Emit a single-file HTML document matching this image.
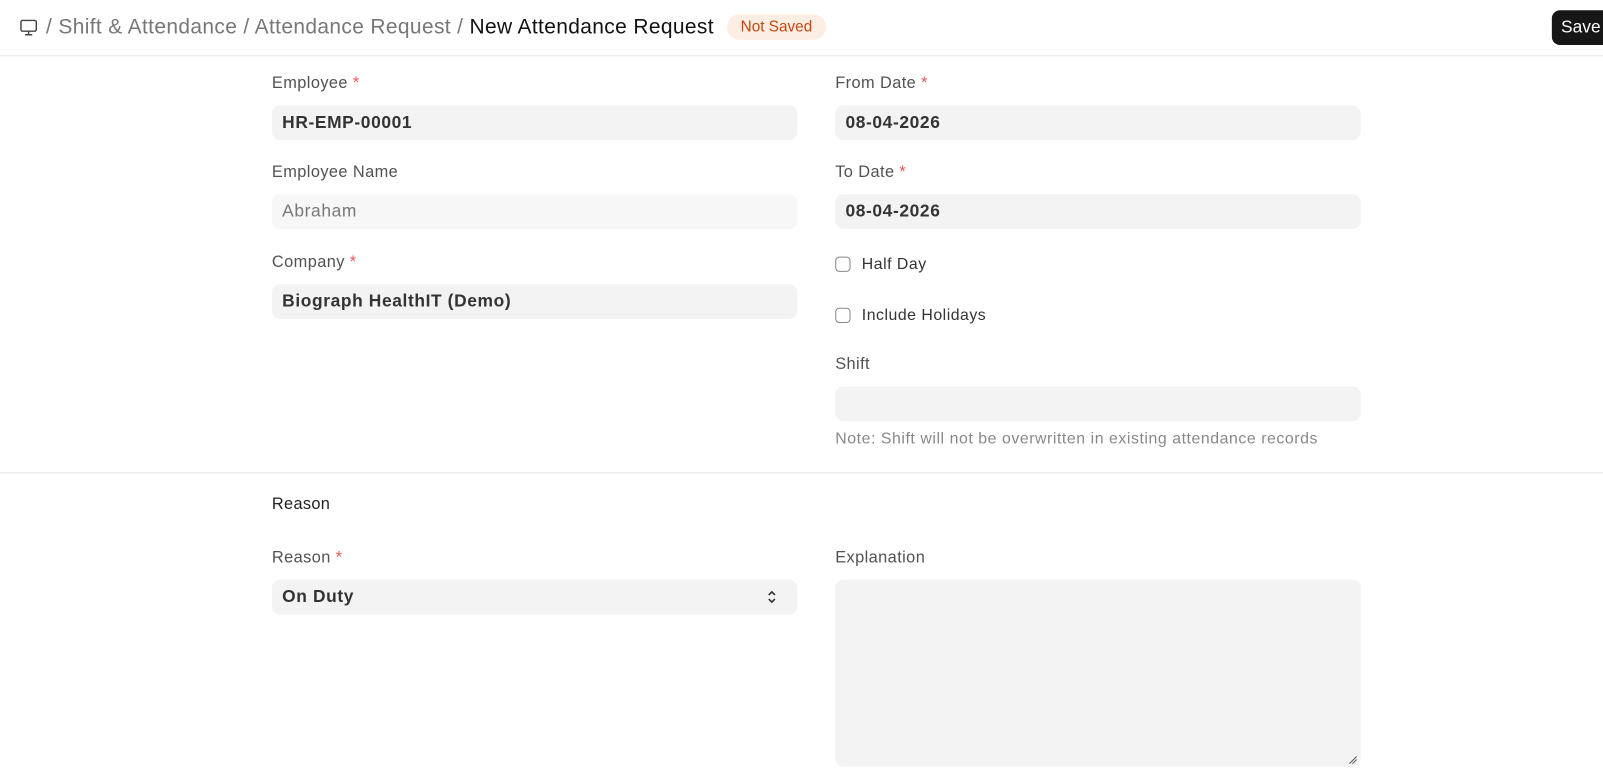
<!DOCTYPE html>
<html><head><style>
*{box-sizing:border-box;margin:0;padding:0}
body{width:1603px;height:783px;overflow:hidden;background:#fff;font-family:"Liberation Sans",sans-serif;position:relative;color:#383838}
#w{position:absolute;left:0;top:0;width:1568px;height:766px;transform:scale(1.0223);transform-origin:0 0}
.a{position:absolute}
.lbl{position:absolute;font-size:16px;letter-spacing:.4px;color:#525252}
.req{color:#e55;}
.inp{position:absolute;height:34px;background:#f3f3f3;border-radius:8px;font-size:17px;letter-spacing:.6px;font-weight:bold;color:#333;padding:0 10px;line-height:34px;width:514px}
.cb{position:absolute;width:15px;height:15px;border:1px solid #888;border-radius:4px;background:#fff}
.cbl{position:absolute;font-size:15.5px;letter-spacing:.5px;color:#333}
</style></head><body><div id="w">
<svg class="a" style="left:19px;top:18px" width="18" height="18" viewBox="0 0 18 18" fill="none" stroke="#444" stroke-width="1.4"><rect x="1.5" y="2" width="15" height="10.5" rx="1.5"/><path d="M9 12.5v3.5M5.5 16h7"/></svg>
<div class="a" style="left:45px;top:15px;font-size:20.5px;letter-spacing:.35px;color:#777;white-space:nowrap">/ Shift &amp; Attendance / Attendance Request / <span style="color:#111">New Attendance Request</span></div>
<div class="a" style="left:711px;top:14px;width:97px;height:25px;border-radius:13px;background:#fdeee4;color:#c4470f;font-size:15px;text-align:center;line-height:25px">Not Saved</div>
<div class="a" style="left:1518px;top:10px;width:100px;height:34px;border-radius:8px;background:#171717;color:#fff;font-size:17px;line-height:34px;padding-left:9px">Save</div>
<div class="a" style="left:0;top:54px;width:1603px;height:1px;background:#e8e8e8"></div>

<div class="lbl" style="left:266px;top:73px">Employee <span class="req">*</span></div>
<div class="inp" style="left:266px;top:103px">HR-EMP-00001</div>
<div class="lbl" style="left:266px;top:160px">Employee Name</div>
<div class="inp" style="left:266px;top:190px;background:#f7f7f7;font-weight:normal;color:#777">Abraham</div>
<div class="lbl" style="left:266px;top:248px">Company <span class="req">*</span></div>
<div class="inp" style="left:266px;top:278px">Biograph HealthIT (Demo)</div>

<div class="lbl" style="left:817px;top:73px">From Date <span class="req">*</span></div>
<div class="inp" style="left:817px;top:103px">08-04-2026</div>
<div class="lbl" style="left:817px;top:160px">To Date <span class="req">*</span></div>
<div class="inp" style="left:817px;top:190px">08-04-2026</div>
<div class="cb" style="left:817px;top:251px"></div><div class="cbl" style="left:843px;top:250px">Half Day</div>
<div class="cb" style="left:817px;top:301px"></div><div class="cbl" style="left:843px;top:300px">Include Holidays</div>
<div class="lbl" style="left:817px;top:348px">Shift</div>
<div class="inp" style="left:817px;top:378px"></div>
<div class="a" style="left:817px;top:421px;font-size:15.5px;letter-spacing:.55px;color:#888;white-space:nowrap">Note: Shift will not be overwritten in existing attendance records</div>

<div class="a" style="left:0;top:462px;width:1603px;height:1px;background:#e5e5e5"></div>
<div class="a" style="left:266px;top:485px;font-size:16px;letter-spacing:.3px;color:#222">Reason</div>
<div class="lbl" style="left:266px;top:537px">Reason <span class="req">*</span></div>
<div class="inp" style="left:266px;top:567px">On Duty</div>
<svg class="a" style="left:749px;top:576px" width="12" height="16" viewBox="0 0 12 16" fill="none" stroke="#333" stroke-width="1.6"><path d="M3 6l3-3 3 3M3 10l3 3 3-3"/></svg>
<div class="lbl" style="left:817px;top:537px">Explanation</div>
<div class="inp" style="left:817px;top:567px;height:183px"></div>
<svg class="a" style="left:1319px;top:739px" width="9" height="9" stroke="#555" stroke-width="1"><path d="M1 8L8 1M4 8L8 4"/></svg>
</div></body></html>
